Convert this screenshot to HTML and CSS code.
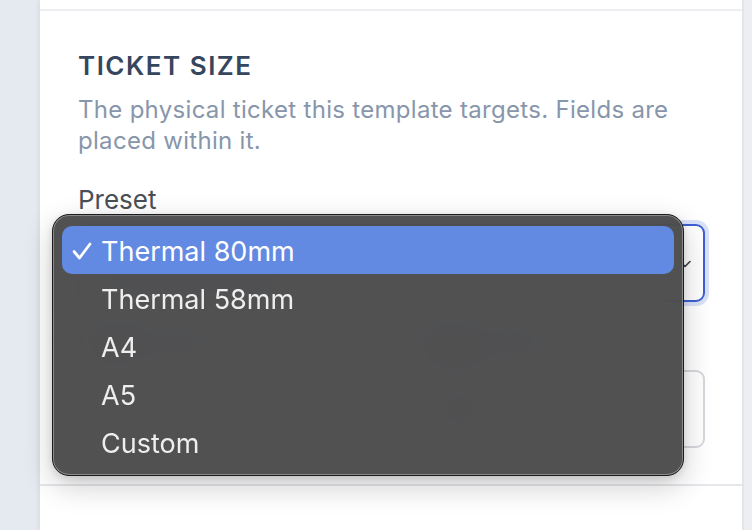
FILE: index.html
```html
<!DOCTYPE html>
<html lang="en">
<head>
<meta charset="utf-8">
<title>Ticket size</title>
<link rel="stylesheet" href="styles.css">
</head>
<body>
<div class="app">
  <aside class="gutter"></aside>
  <main class="panel">
    <div class="prev-section"></div>
    <section class="section">
      <h2 class="title">TICKET SIZE</h2>
      <p class="desc">The physical ticket this template targets. Fields are placed within it.</p>
      <div class="field">
        <label class="label">Preset</label>
        <div class="select is-focused">
          <span class="select-value">Thermal 80mm</span>
          <svg class="chevron" width="12" height="8" viewBox="0 0 12 8"><path d="M1 1.5 L6 6.5 L11 1.5" fill="none" stroke="#3a3d42" stroke-width="1.6" stroke-linecap="round" stroke-linejoin="round"/></svg>
        </div>
      </div>
      <div class="grid">
        <div class="field">
          <label class="label">Width (mm)</label>
          <div class="input">80</div>
        </div>
        <div class="field">
          <label class="label">Height (mm)</label>
          <div class="input">Auto</div>
        </div>
      </div>

      <ul class="menu">
        <li class="menu-item is-selected">
          <svg class="check" width="22" height="20" viewBox="0 0 22 20"><path d="M3 10.5 L8.5 17 L19 3" fill="none" stroke="#ffffff" stroke-width="2.8" stroke-linecap="round" stroke-linejoin="round"/></svg>
          <span>Thermal 80mm</span>
        </li>
        <li class="menu-item"><span>Thermal 58mm</span></li>
        <li class="menu-item"><span>A4</span></li>
        <li class="menu-item"><span>A5</span></li>
        <li class="menu-item"><span>Custom</span></li>
      </ul>
    </section>
  </main>
  <div class="scroll"></div>
</div>
</body>
</html>
```

FILE: styles.css
```css
* { box-sizing: border-box; }
html, body { margin: 0; padding: 0; }
body {
  width: 752px;
  height: 530px;
  overflow: hidden;
  background: #ffffff;
  font-family: "Inter", "Noto Sans", sans-serif;
}
.app {
  display: flex;
  height: 530px;
}
.gutter {
  width: 40px;
  flex: none;
  background: #e5e9f0;
}
.panel {
  flex: 1;
  background: #ffffff;
  box-shadow: -2px 0 4px rgba(30, 40, 60, 0.06);
  position: relative;
}
.scroll {
  width: 10px;
  flex: none;
  background: #eceef2;
  border-left: 2px solid #e3e5ea;
}
.prev-section {
  height: 11px;
  border-bottom: 2px solid #eceef1;
}
.section {
  position: relative;
  padding: 39px 37px 36px 38px;
  border-bottom: 2px solid #e6e7ea;
}
.title {
  margin: 0;
  font-size: 26px;
  line-height: 32px;
  font-weight: 600;
  letter-spacing: 1.5px;
  color: #36465e;
}
.desc {
  margin: 12px 0 0;
  font-size: 24px;
  line-height: 31px;
  color: #8796ab;
  letter-spacing: 0.3px;
}
.field {
  display: flex;
  flex-direction: column;
}
.desc + .field { margin-top: 28px; }
.label {
  font-size: 26px;
  line-height: 32px;
  color: #4a4f57;
  margin-bottom: 8px;
}
.select {
  height: 78px;
  border: 2px solid #3d5fd3;
  border-radius: 9px;
  box-shadow: 0 0 0 4px rgba(70, 110, 230, 0.2);
  display: flex;
  align-items: center;
  justify-content: space-between;
  padding: 0 12px 0 22px;
  font-size: 26px;
  color: #2a2e35;
}
.chevron { margin-top: 2px; }
.grid {
  display: grid;
  grid-template-columns: 1fr 1fr;
  column-gap: 32px;
  margin-top: 28px;
}
.input {
  height: 78px;
  border: 2px solid #d6d8dd;
  border-radius: 9px;
  display: flex;
  align-items: center;
  padding: 0 22px;
  font-size: 26px;
  color: #2a2e35;
}

/* native-style popup menu */
.menu {
  position: absolute;
  left: 12px;
  top: 203px;
  width: 632px;
  height: 262px;
  margin: 0;
  padding: 11px 9px 9px;
  list-style: none;
  background: rgba(72, 72, 73, 0.95);
  backdrop-filter: blur(22px);
  border: 1px solid #1c1c1e;
  border-radius: 17px;
  box-shadow:
    inset 0 0 0 1px rgba(255, 255, 255, 0.32),
    0 10px 30px rgba(0, 0, 0, 0.2),
    0 2px 8px rgba(0, 0, 0, 0.12);
  font-family: "Inter", "Noto Sans", sans-serif;
}
.menu-item {
  position: relative;
  height: 48px;
  display: flex;
  align-items: center;
  padding-left: 39px;
  padding-top: 2px;
  font-size: 27px;
  color: #eeeeee;
  border-radius: 10px;
}
.menu-item.is-selected {
  background: #628ae2;
  color: #ffffff;
}
.check {
  position: absolute;
  left: 9px;
  top: 15px;
}
```
